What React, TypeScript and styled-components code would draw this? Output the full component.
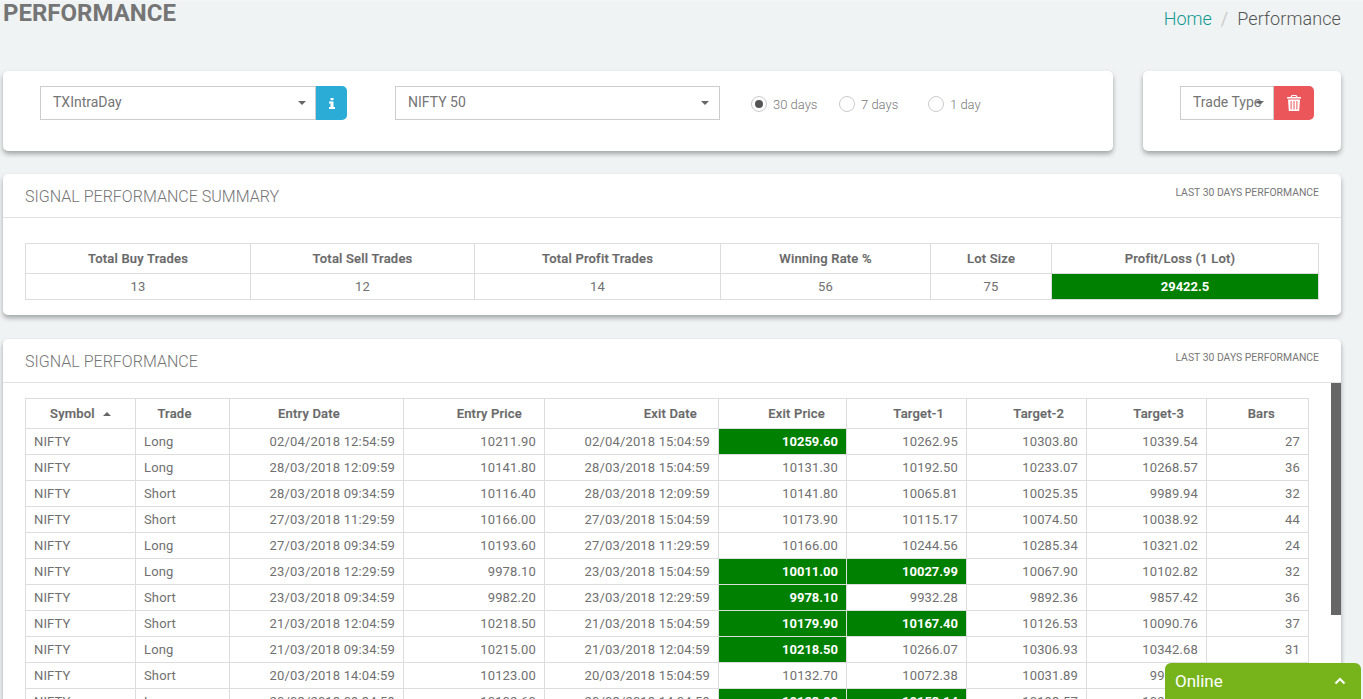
import React from "react";
import styled, { createGlobalStyle } from "styled-components";

const Global = createGlobalStyle`
  html, body { margin: 0; padding: 0; height: 699px; overflow: hidden; background: #eff3f4; }
  * { box-sizing: border-box; }
  body { font-family: Roboto, "Liberation Sans", sans-serif; color: #686868; font-size: 13px; }
`;
const Page = styled.div`
  width: 1363px; height: 699px; overflow: hidden; padding: 0 22px 0 3px; border-top: 1px solid #f3f5f6;
`;
const TitleRow = styled.div`
  display: flex; justify-content: space-between; height: 70px;
`;
const Title = styled.h1`
  margin: 0; font-size: 24px; line-height: 24px; font-weight: 700; color: #757575;
`;
const Crumbs = styled.div`
  display: flex; gap: 9px; font-size: 18px; line-height: 22px; padding-top: 7px; font-weight: 400; color: #ccc;
`;
const CrumbLink = styled.span` color: #0f9a91; font-weight: 300; `;
const CrumbNow = styled.span` color: #555; font-weight: 300; letter-spacing: .1px; `;
const FilterRow = styled.div`
  display: flex; justify-content: space-between; margin-bottom: 23px;
`;
const Card = styled.section<{ $w?: string }>`
  background: #fff; border-radius: 5px; box-shadow: 0 3px 5px rgba(0,0,0,.32);
  width: ${p => p.$w || "auto"};
`;
const FilterCard = styled(Card)<{ $px: string }>`
  height: 80px; display: flex; align-items: flex-start; padding: 15px ${p => p.$px} 0;
`;
const SelectBox = styled.div<{ $w: number; $mr?: number }>`
  position: relative; width: ${p => p.$w}px; height: 34px; margin-right: ${p => p.$mr || 0}px;
  border: 1px solid #ccc; font-size: 14px; line-height: 31px; padding-left: 12px; color: #757575; flex: none;
  font-weight: 400; white-space: nowrap;
`;
const Caret = styled.i<{ $r: number }>`
  position: absolute; right: ${p => p.$r}px; top: 14px; width: 0; height: 0;
  border-left: 4px solid transparent; border-right: 4px solid transparent; border-top: 4px solid #666;
`;
const AddonButton = styled.div<{ $bg: string; $w: number; $mr?: number }>`
  width: ${p => p.$w}px; height: 34px; background: ${p => p.$bg}; border-radius: 0 5px 5px 0; flex: none;
  margin-right: ${p => p.$mr || 0}px; display: flex; align-items: center; justify-content: center;
`;
const Radios = styled.div`
  display: flex; height: 34px; align-items: center; margin-left: 31px; padding-top: 2px; font-size: 13px; font-weight: 300; color: #777;
`;
const RadioItem = styled.label<{ $w: number }>`
  display: flex; align-items: center; gap: 6px; width: ${p => p.$w}px;
`;
const RadioDot = styled.span<{ $on?: boolean }>`
  width: 16px; height: 16px; border-radius: 50%; border: 1px solid #ccc; display: flex; align-items: center; justify-content: center; flex: none;
  &::after { content: ""; width: 8px; height: 8px; border-radius: 50%; background: ${p => p.$on ? "#555" : "transparent"}; }
`;
const CardHead = styled.header`
  height: 44px; border-bottom: 1px solid #e3e3e3; padding: 0 22px; display: flex; justify-content: space-between;
`;
const CardTitle = styled.h2`
  margin: 0; font-size: 16.05px; font-weight: 300; line-height: 45px; color: #757575;
`;
const CardNote = styled.span`
  font-size: 10.4px; line-height: 12px; padding-top: 13px; color: #777;
`;
const SummaryCard = styled(Card)`
  height: 141px; margin-bottom: 24px;
`;
const SummaryBody = styled.div` padding: 25px 22px 0; `;
const TableCard = styled(Card)`
  position: relative; height: 360px; overflow: hidden; border-radius: 5px 5px 0 0;
`;
const TableBody = styled.div` padding: 15px 32px 0 22px; `;
const Table = styled.table`
  width: 100%; border-collapse: collapse; table-layout: fixed; font-size: 13px;
  th, td { border: 1px solid #ddd; }
`;
const Th = styled.th<{ $right?: boolean; $pr?: number; $h: number }>`
  height: ${p => p.$h}px; font-weight: 500; font-size: 13px; color: #686868; padding: 0 ${p => p.$pr ?? 8}px 0 8px;
  text-align: ${p => p.$right ? "right" : "center"};
  white-space: nowrap; letter-spacing: .2px; -webkit-text-stroke: .2px #686868;
`;
const Td = styled.td<{ $align?: string; $win?: boolean; $h: number }>`
  height: ${p => p.$h}px; padding: 0 8px; text-align: ${p => p.$align || "right"}; font-weight: ${p => p.$win ? 700 : 400};
  color: ${p => p.$win ? "#fff" : "#707070"}; background: ${p => p.$win ? "green" : "transparent"}; white-space: nowrap;
  letter-spacing: ${p => p.$win ? "0" : ".15px"};
`;
const SortArrow = styled.i`
  display: inline-block; margin-left: 8px; vertical-align: 2px; width: 0; height: 0;
  border-left: 4px solid transparent; border-right: 4px solid transparent; border-bottom: 4px solid #666;
`;
const ScrollThumb = styled.div`
  position: absolute; right: 0; top: 44px; width: 10px; height: 232px; background: #666;
`;
const Chat = styled.div`
  position: fixed; left: 1165px; top: 663px; width: 196px; height: 36px; background: #77b41c; border-radius: 6px 6px 0 0;
  color: #fff; font-size: 17px; display: flex; align-items: center; justify-content: space-between; padding: 0 15px 0 10px;
`;

const summaryCols = [225, 224, 246, 210, 121, 267];
const summary: [string, number?][] = [["Total Buy Trades"], ["Total Sell Trades"], ["Total Profit Trades"], ["Winning Rate %"], ["Lot Size"], ["Profit/Loss (1 Lot)", 18]];
const summaryVals = ["13", "12", "14", "56", "75", "29422.5"];

const cols = [110, 94, 174, 141, 174, 128, 120, 120, 120, 102];
const heads: [string, boolean, number][] = [
  ["Symbol", false, 8], ["Trade", false, 24], ["Entry Date", false, 23], ["Entry Price", true, 22], ["Exit Date", true, 21],
  ["Exit Price", true, 21], ["Target-1", true, 22], ["Target-2", true, 22], ["Target-3", true, 22], ["Bars", true, 33],
];
type Row = [string, string, string, string, string, string, string, string, string, string, string, number?];
const rows: Row[] = [
  ["NIFTY","Long","02/04/2018 12:54:59","10211.90","02/04/2018 15:04:59","10259.60","10262.95","10303.80","10339.54","27","",1],
  ["NIFTY","Long","28/03/2018 12:09:59","10141.80","28/03/2018 15:04:59","10131.30","10192.50","10233.07","10268.57","36","",0],
  ["NIFTY","Short","28/03/2018 09:34:59","10116.40","28/03/2018 12:09:59","10141.80","10065.81","10025.35","9989.94","32","",0],
  ["NIFTY","Short","27/03/2018 11:29:59","10166.00","27/03/2018 15:04:59","10173.90","10115.17","10074.50","10038.92","44","",0],
  ["NIFTY","Long","27/03/2018 09:34:59","10193.60","27/03/2018 11:29:59","10166.00","10244.56","10285.34","10321.02","24","",0],
  ["NIFTY","Long","23/03/2018 12:29:59","9978.10","23/03/2018 15:04:59","10011.00","10027.99","10067.90","10102.82","32","",2],
  ["NIFTY","Short","23/03/2018 09:34:59","9982.20","23/03/2018 12:29:59","9978.10","9932.28","9892.36","9857.42","36","",1],
  ["NIFTY","Short","21/03/2018 12:04:59","10218.50","21/03/2018 15:04:59","10179.90","10167.40","10126.53","10090.76","37","",2],
  ["NIFTY","Long","21/03/2018 09:34:59","10215.00","21/03/2018 12:04:59","10218.50","10266.07","10306.93","10342.68","31","",1],
  ["NIFTY","Short","20/03/2018 14:04:59","10123.00","20/03/2018 15:04:59","10132.70","10072.38","10031.89","9996.46","12","",0],
  ["NIFTY","Long","20/03/2018 09:34:59","10102.60","20/03/2018 14:04:59","10123.00","10153.14","10193.57","10228.96","54","",2],
];

export default function App() {
  return (
    <Page>
      <Global />
      <TitleRow>
        <Title>PERFORMANCE</Title>
        <Crumbs><CrumbLink>Home</CrumbLink><span>/</span><CrumbNow>Performance</CrumbNow></Crumbs>
      </TitleRow>
      <FilterRow>
        <FilterCard $w="1110px" $px="37px">
          <SelectBox $w={276}>TXIntraDay<Caret $r={9} /></SelectBox>
          <AddonButton $bg="#2bacd6" $w={31} $mr={48}>
            <svg width="6" height="11" viewBox="0 0 6 11"><path fill="#fff" d="M1.500 0h3v2.200h-3zM0 3.400h4.500V9H6v2H0V9h1.500V5.400H0z" /></svg>
          </AddonButton>
          <SelectBox $w={325}>NIFTY 50<Caret $r={10} /></SelectBox>
          <Radios>
            <RadioItem $w={88}><RadioDot $on />30 days</RadioItem>
            <RadioItem $w={89}><RadioDot />7 days</RadioItem>
            <RadioItem $w={60}><RadioDot />1 day</RadioItem>
          </Radios>
        </FilterCard>
        <FilterCard $w="198px" $px="37px">
          <SelectBox $w={94}>Trade Type<Caret $r={9} /></SelectBox>
          <AddonButton $bg="#ea5659" $w={40}>
            <svg width="14" height="16" viewBox="0 0 14 16"><path fill="#fff" d="M4.500 0h5l1 2H14v1.600H0V2h3.500zM5.300 1 5 2h4l-.3-1zM1 4.600h12L12.200 16H1.800zM3.600 6v8.600h1V6zm2.900 0v8.600h1V6zm2.900 0v8.600h1V6z" /></svg>
          </AddonButton>
        </FilterCard>
      </FilterRow>
      <SummaryCard>
        <CardHead><CardTitle>SIGNAL PERFORMANCE SUMMARY</CardTitle><CardNote>LAST 30 DAYS PERFORMANCE</CardNote></CardHead>
        <SummaryBody>
          <Table>
            <colgroup>{summaryCols.map((w, i) => <col key={i} style={{ width: w }} />)}</colgroup>
            <thead><tr>{summary.map(([s, pr]) => <Th key={s} $h={30} $pr={pr}>{s}</Th>)}</tr></thead>
            <tbody><tr>{summaryVals.map((v, i) => <Td key={v} $h={26} $align="center" $win={i === 5}>{v}</Td>)}</tr></tbody>
          </Table>
        </SummaryBody>
      </SummaryCard>
      <TableCard>
        <CardHead><CardTitle>SIGNAL PERFORMANCE</CardTitle><CardNote>LAST 30 DAYS PERFORMANCE</CardNote></CardHead>
        <ScrollThumb />
        <TableBody>
          <Table>
            <colgroup>{cols.map((w, i) => <col key={i} style={{ width: w }} />)}</colgroup>
            <thead><tr>{heads.map(([h, r, pr], i) => <Th key={h} $h={30} $right={r} $pr={pr}>{h}{i === 0 && <SortArrow />}</Th>)}</tr></thead>
            <tbody>
              {rows.map((r, i) => (
                <tr key={i}>
                  {r.slice(0, 10).map((v, j) => (
                    <Td key={j} $h={26} $align={j < 2 ? "left" : "right"} $win={(j === 5 && (r[11] as number) > 0) || (j === 6 && r[11] === 2)}>{v}</Td>
                  ))}
                </tr>
              ))}
            </tbody>
          </Table>
        </TableBody>
      </TableCard>
      <Chat>Online
        <svg width="12" height="8" viewBox="0 0 12 8"><path d="M1.500 6.500 6 2l4.500 4.500" fill="none" stroke="#fff" strokeWidth="2" /></svg>
      </Chat>
    </Page>
  );
}
